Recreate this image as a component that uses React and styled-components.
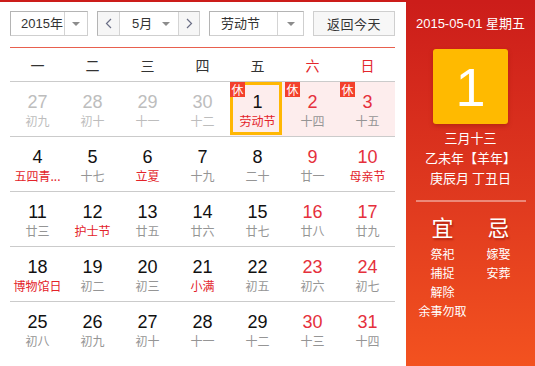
import React from 'react';
import styled, { createGlobalStyle } from 'styled-components';

const GlobalStyle = createGlobalStyle`
  html, body {
    margin: 0;
    padding: 0;
    background: #fff;
  }
  body {
    font-family: 'Liberation Sans', 'Noto Sans CJK SC', sans-serif;
  }
`;

const Widget = styled.div`
  width: 535px;
  height: 364px;
  display: flex;
  border-top: 2px solid #cc1d1a;
  overflow: hidden;
`;

const Main = styled.div`
  width: 406px;
  flex-shrink: 0;
  padding: 9px 11px 0 10px;
  box-sizing: border-box;
`;

const Toolbar = styled.div`
  display: flex;
  gap: 9px;
  height: 25px;
  font-size: 13px;
  color: #333;
`;

const SelectBox = styled.div`
  width: ${p => p.$w}px;
  display: flex;
  box-sizing: border-box;
  border: 1px solid #b4b4b4;
  border-right-color: #cfcfcf;
  border-bottom-color: #cfcfcf;
  background: #fff;
`;

const SelectText = styled.div`
  flex: 1;
  display: flex;
  align-items: center;
  padding-left: ${p => p.$pad || 10}px;
  line-height: 23px;
`;

const ArrowPart = styled.div`
  width: ${p => p.$w || 22}px;
  border-left: ${p => (p.$noline ? 'none' : '1px solid #d4d4d4')};
  display: flex;
  align-items: center;
  justify-content: center;
`;

const Tri = styled.span`
  width: 0;
  height: 0;
  border-left: 4px solid transparent;
  border-right: 4px solid transparent;
  border-top: 4px solid #8c8c8c;
`;

const NavBtn = styled.div`
  width: ${p => p.$w}px;
  display: flex;
  align-items: center;
  justify-content: center;
  background: #f6f6f6;
  ${p => (p.$left ? 'border-right: 1px solid #d4d4d4;' : 'border-left: 1px solid #d4d4d4;')}
`;

const TodayBtn = styled.div`
  width: 82px;
  box-sizing: border-box;
  border: 1px solid #cfcfcf;
  background: #f7f7f7;
  display: flex;
  align-items: center;
  justify-content: center;
  letter-spacing: 0.5px;
`;

const WeekHeader = styled.div`
  margin-top: 11px;
  display: grid;
  grid-template-columns: repeat(7, 55px);
  height: 33px;
  border-top: 1px solid #e8604e;
  border-bottom: 1px solid #cbcbcb;
`;

const WeekDay = styled.div`
  display: flex;
  align-items: center;
  justify-content: center;
  font-size: 14px;
  color: ${p => (p.$red ? '#e3262c' : '#333')};
`;

const Row = styled.div`
  display: grid;
  grid-template-columns: repeat(7, 55px);
  height: 54px;
  border-bottom: ${p => (p.$last ? 'none' : '1px solid #cbcbcb')};
`;

const Cell = styled.div`
  position: relative;
  text-align: center;
  background: ${p => (p.$holiday ? '#fdeded' : 'transparent')};
  ${p => p.$selected && `
    &::after {
      content: '';
      position: absolute;
      top: 0;
      left: 0;
      right: 3px;
      bottom: 1px;
      border: 3px solid #ffb703;
      background: rgba(253, 237, 237, 0.5);
      z-index: 0;
    }
  `}
`;

const DayNum = styled.div`
  position: relative;
  z-index: 1;
  padding-top: 10px;
  font-size: 18px;
  line-height: 20px;
  color: ${p => p.$color};
`;

const Lunar = styled.div`
  position: relative;
  z-index: 1;
  margin-top: 1px;
  padding: 0 2px;
  font-size: 12px;
  line-height: 16px;
  color: ${p => p.$color};
  white-space: nowrap;
  font-family: 'Noto Sans CJK SC', sans-serif;
`;

const RestBadge = styled.span`
  position: absolute;
  top: 0;
  left: 0;
  z-index: 2;
  width: 15px;
  height: 15px;
  background: #f3402c;
  color: #fff;
  font-size: 12px;
  line-height: 15px;
  text-align: center;
  font-family: 'Noto Sans CJK SC', sans-serif;
`;

const Side = styled.div`
  flex: 1;
  background: linear-gradient(180deg, #cc1d1a 0%, #e03a1f 55%, #f3521f 100%);
  color: #fff;
  display: flex;
  flex-direction: column;
  align-items: center;
`;

const SideDate = styled.div`
  margin-top: 13px;
  font-size: 13px;
  line-height: 18px;
`;

const BigDay = styled.div`
  margin-top: 16px;
  width: 75px;
  height: 75px;
  border-radius: 3px;
  background: #ffba00;
  box-shadow: 0 2px 4px rgba(120, 20, 0, 0.35);
  display: flex;
  align-items: center;
  justify-content: center;
  font-size: 54px;
  line-height: 1;
`;

const LunarInfo = styled.div`
  margin-top: 4px;
  font-size: 13px;
  line-height: 20px;
  text-align: center;
  font-family: 'Noto Sans CJK SC', sans-serif;
`;

const Divider = styled.div`
  margin-top: 12px;
  width: 110px;
  height: 2px;
  background: rgba(255, 255, 255, 0.4);
`;

const Almanac = styled.div`
  margin-top: 11px;
  display: grid;
  grid-template-columns: 56px 56px;
  font-family: 'Noto Sans CJK SC', sans-serif;
`;

const AlmanacCol = styled.div`
  display: flex;
  flex-direction: column;
  align-items: center;
`;

const AlmanacHead = styled.div`
  font-size: 22px;
  line-height: 26px;
  text-shadow: 1px 2px 2px rgba(110, 0, 0, 0.45);
  margin-bottom: 5px;
`;

const AlmanacItem = styled.div`
  font-size: 12px;
  line-height: 19px;
  white-space: nowrap;
`;

const Chevron = ({ dir }) => (
  <svg width="7" height="11" viewBox="0 0 7 11">
    <polyline
      points={dir === 'left' ? '6,1 1.5,5.5 6,10' : '1,1 5.5,5.5 1,10'}
      fill="none"
      stroke="#6b6f86"
      strokeWidth="1.2"
    />
  </svg>
);

const weekDays = ['一', '二', '三', '四', '五', '六', '日'];

// [day, lunar, flags] — o: other month, f: festival, h: holiday, s: selected
const weeks = [
  [[27, '初九', 'o'], [28, '初十', 'o'], [29, '十一', 'o'], [30, '十二', 'o'], [1, '劳动节', 'fhs'], [2, '十四', 'h'], [3, '十五', 'h']],
  [[4, '五四青...', 'f'], [5, '十七'], [6, '立夏', 'f'], [7, '十九'], [8, '二十'], [9, '廿一'], [10, '母亲节', 'f']],
  [[11, '廿三'], [12, '护士节', 'f'], [13, '廿五'], [14, '廿六'], [15, '廿七'], [16, '廿八'], [17, '廿九']],
  [[18, '博物馆日', 'f'], [19, '初二'], [20, '初三'], [21, '小满', 'f'], [22, '初五'], [23, '初六'], [24, '初七']],
  [[25, '初八'], [26, '初九'], [27, '初十'], [28, '十一'], [29, '十二'], [30, '十三'], [31, '十四']],
];

const DayCell = ({ day, lunar, flags = '', col }) => {
  const other = flags.includes('o');
  const weekend = col >= 5;
  const numColor = other ? '#bdbdbd' : weekend ? '#e5303c' : '#111';
  const lunarColor = other ? '#bdbdbd' : flags.includes('f') ? '#e3232a' : '#959595';
  return (
    <Cell $holiday={flags.includes('h') || flags.includes('s')} $selected={flags.includes('s')}>
      {flags.includes('h') && <RestBadge>休</RestBadge>}
      <DayNum $color={numColor}>{day}</DayNum>
      <Lunar $color={lunarColor}>{lunar}</Lunar>
    </Cell>
  );
};

const App = () => (
  <>
    <GlobalStyle />
    <Widget>
      <Main>
        <Toolbar>
          <SelectBox $w={78}>
            <SelectText>2015年</SelectText>
            <ArrowPart><Tri /></ArrowPart>
          </SelectBox>
          <SelectBox $w={103}>
            <NavBtn $w={21} $left><Chevron dir="left" /></NavBtn>
            <SelectText $pad={12}>5月</SelectText>
            <ArrowPart $w={24} $noline><Tri /></ArrowPart>
            <NavBtn $w={20}><Chevron dir="right" /></NavBtn>
          </SelectBox>
          <SelectBox $w={95}>
            <SelectText $pad={11}>劳动节</SelectText>
            <ArrowPart $w={25}><Tri /></ArrowPart>
          </SelectBox>
          <TodayBtn>返回今天</TodayBtn>
        </Toolbar>

        <WeekHeader>
          {weekDays.map((d, i) => (
            <WeekDay key={d} $red={i >= 5}>{d}</WeekDay>
          ))}
        </WeekHeader>

        {weeks.map((week, wi) => (
          <Row key={wi} $last={wi === weeks.length - 1}>
            {week.map(([day, lunar, flags], ci) => (
              <DayCell key={ci} day={day} lunar={lunar} flags={flags} col={ci} />
            ))}
          </Row>
        ))}
      </Main>

      <Side>
        <SideDate>2015-05-01 星期五</SideDate>
        <BigDay>1</BigDay>
        <LunarInfo>
          <div>三月十三</div>
          <div>乙未年【羊年】</div>
          <div>庚辰月 丁丑日</div>
        </LunarInfo>
        <Divider />
        <Almanac>
          <AlmanacCol>
            <AlmanacHead>宜</AlmanacHead>
            <AlmanacItem>祭祀</AlmanacItem>
            <AlmanacItem>捕捉</AlmanacItem>
            <AlmanacItem>解除</AlmanacItem>
            <AlmanacItem>余事勿取</AlmanacItem>
          </AlmanacCol>
          <AlmanacCol>
            <AlmanacHead>忌</AlmanacHead>
            <AlmanacItem>嫁娶</AlmanacItem>
            <AlmanacItem>安葬</AlmanacItem>
          </AlmanacCol>
        </Almanac>
      </Side>
    </Widget>
  </>
);

export default App;
